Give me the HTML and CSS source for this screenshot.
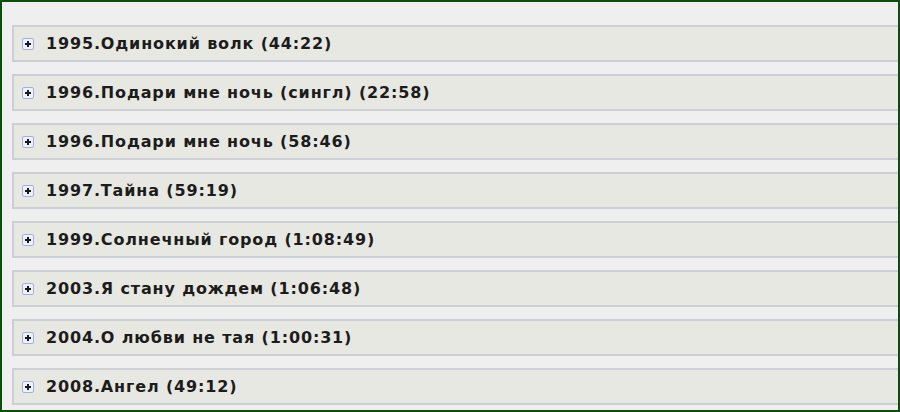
FILE: index.html
```html
<!DOCTYPE html>
<html lang="ru">
<head>
    <meta charset="UTF-8">
    <title>Альбомы</title>
    <link rel="stylesheet" href="styles.css">
</head>
<body>
    <div class="frame">
        <div class="spoiler"><span class="toggle"></span>1995.Одинокий волк (44:22)</div>
        <div class="spoiler"><span class="toggle"></span>1996.Подари мне ночь (сингл) (22:58)</div>
        <div class="spoiler"><span class="toggle"></span>1996.Подари мне ночь (58:46)</div>
        <div class="spoiler"><span class="toggle"></span>1997.Тайна (59:19)</div>
        <div class="spoiler"><span class="toggle"></span>1999.Солнечный город (1:08:49)</div>
        <div class="spoiler"><span class="toggle"></span>2003.Я стану дождем (1:06:48)</div>
        <div class="spoiler"><span class="toggle"></span>2004.О любви не тая (1:00:31)</div>
        <div class="spoiler"><span class="toggle"></span>2008.Ангел (49:12)</div>
    </div>
</body>
</html>
```

FILE: styles.css
```css
body {
    margin: 0;
    font-family: "DejaVu Sans", Verdana, sans-serif;
}
.frame {
    height: 412px;
    box-sizing: border-box;
    border: 2px solid #0b4d0b;
    background: #efefef;
    padding: 23px 0 0 10px;
    display: flex;
    flex-direction: column;
    gap: 12px;
    overflow: hidden;
}
.spoiler {
    height: 37px;
    box-sizing: border-box;
    border: 2px solid #ccd0d6;
    border-right: none;
    background: #e8e8e3;
    display: flex;
    align-items: center;
    padding-left: 8px;
    font-size: 16px;
    font-weight: bold;
    letter-spacing: 0.85px;
    color: #1c1c1c;
    flex-shrink: 0;
}
.toggle {
    width: 10px;
    height: 10px;
    border: 1px solid #a4afe0;
    border-radius: 2px;
    background: #eef0fa;
    margin-right: 12px;
    position: relative;
    flex-shrink: 0;
}
.toggle::before,
.toggle::after {
    content: "";
    position: absolute;
    background: #1a1a1a;
}
.toggle::before {
    left: 2px;
    top: 4px;
    width: 6px;
    height: 2px;
}
.toggle::after {
    left: 4px;
    top: 2px;
    width: 2px;
    height: 6px;
}
```
